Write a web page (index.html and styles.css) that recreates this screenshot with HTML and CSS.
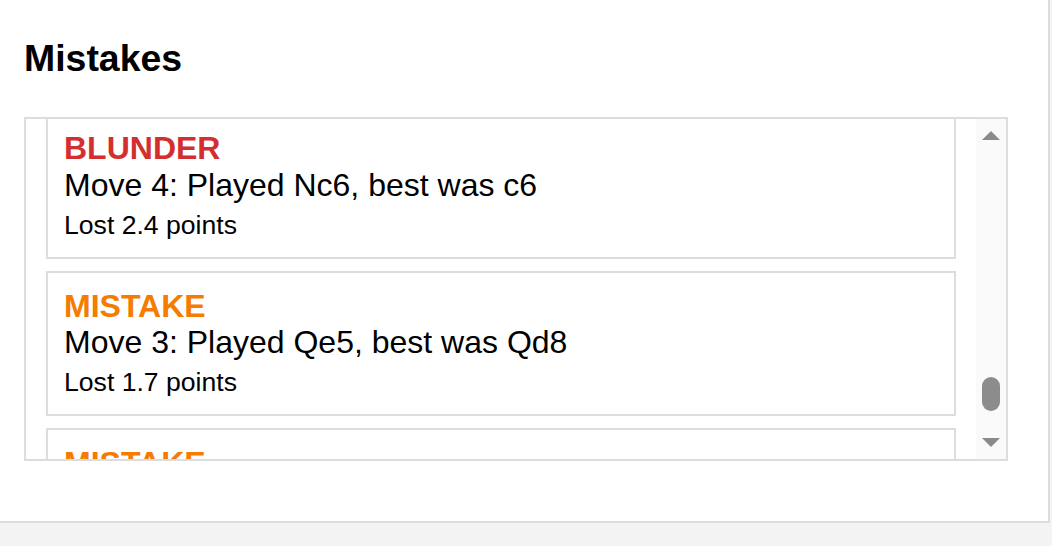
FILE: index.html
```html
<!DOCTYPE html>
<html lang="en">
<head>
<meta charset="utf-8">
<title>Mistakes</title>
<link rel="stylesheet" href="styles.css">
</head>
<body>
<section class="card">
  <h3 class="card-title">Mistakes</h3>
  <div class="scroll-box">
    <div class="scroll-view">
      <div class="mistake-list">
        <div class="mistake">
          <div class="mistake-kind blunder">Blunder</div>
          <div class="mistake-move">Move 4: Played Nc6, best was c6</div>
          <div class="mistake-loss">Lost 2.4 points</div>
        </div>
        <div class="mistake">
          <div class="mistake-kind error">Mistake</div>
          <div class="mistake-move">Move 3: Played Qe5, best was Qd8</div>
          <div class="mistake-loss">Lost 1.7 points</div>
        </div>
        <div class="mistake">
          <div class="mistake-kind error">Mistake</div>
          <div class="mistake-move">Move 2: Played Qh5, best was Nf3</div>
          <div class="mistake-loss">Lost 1.2 points</div>
        </div>
      </div>
    </div>
    <div class="scrollbar">
      <svg class="arrow" width="18" height="9" viewBox="0 0 18 9"><polygon points="9,0 18,9 0,9"/></svg>
      <div class="thumb"></div>
      <svg class="arrow arrow-down" width="18" height="9" viewBox="0 0 18 9"><polygon points="0,0 18,0 9,9"/></svg>
    </div>
  </div>
</section>
</body>
</html>
```
FILE: styles.css
```css
html, body {
  margin: 0;
  padding: 0;
}
body {
  background: #f3f3f3;
  font-family: "Liberation Sans", Arial, sans-serif;
  color: #000;
  width: 1052px;
  height: 546px;
  overflow: hidden;
}
.card {
  box-sizing: border-box;
  width: 1050px;
  height: 523px;
  background: #fff;
  border-right: 2px solid #ddd;
  border-bottom: 2px solid #ddd;
  padding: 37px 0 0 24px;
}
.card-title {
  margin: 0 0 37px;
  font-size: 37.44px;
  font-weight: bold;
  line-height: 43px;
}
.scroll-box {
  box-sizing: border-box;
  width: 984px;
  height: 344px;
  border: 2px solid #ddd;
  display: flex;
  background: #fff;
}
.scroll-view {
  flex: 1;
  overflow: hidden;
  padding: 0 20px;
}
.mistake-list {
  margin-top: -6px;
}
.mistake {
  border: 2px solid #ddd;
  padding: 16px 16px 17px;
  margin-bottom: 12px;
}
.mistake-kind {
  font-size: 32px;
  font-weight: bold;
  text-transform: uppercase;
  line-height: 35.8px;
}
.mistake-kind.blunder { color: #d32f2f; }
.mistake-kind.error { color: #f57c00; }
.mistake-move {
  font-size: 32px;
  line-height: 36.8px;
}
.mistake-loss {
  font-size: 26.6px;
  line-height: 30px;
  margin-top: 6px;
}
.scrollbar {
  width: 30px;
  background: #fafafa;
  display: flex;
  flex-direction: column;
  align-items: center;
  padding-top: 12px;
  box-sizing: border-box;
}
.arrow {
  display: block;
  fill: #8a8a8a;
}
.thumb {
  width: 18px;
  height: 34px;
  border-radius: 9px;
  background: #8c8c8c;
  margin-top: 237px;
}
.arrow-down {
  margin-top: 27px;
}
```
